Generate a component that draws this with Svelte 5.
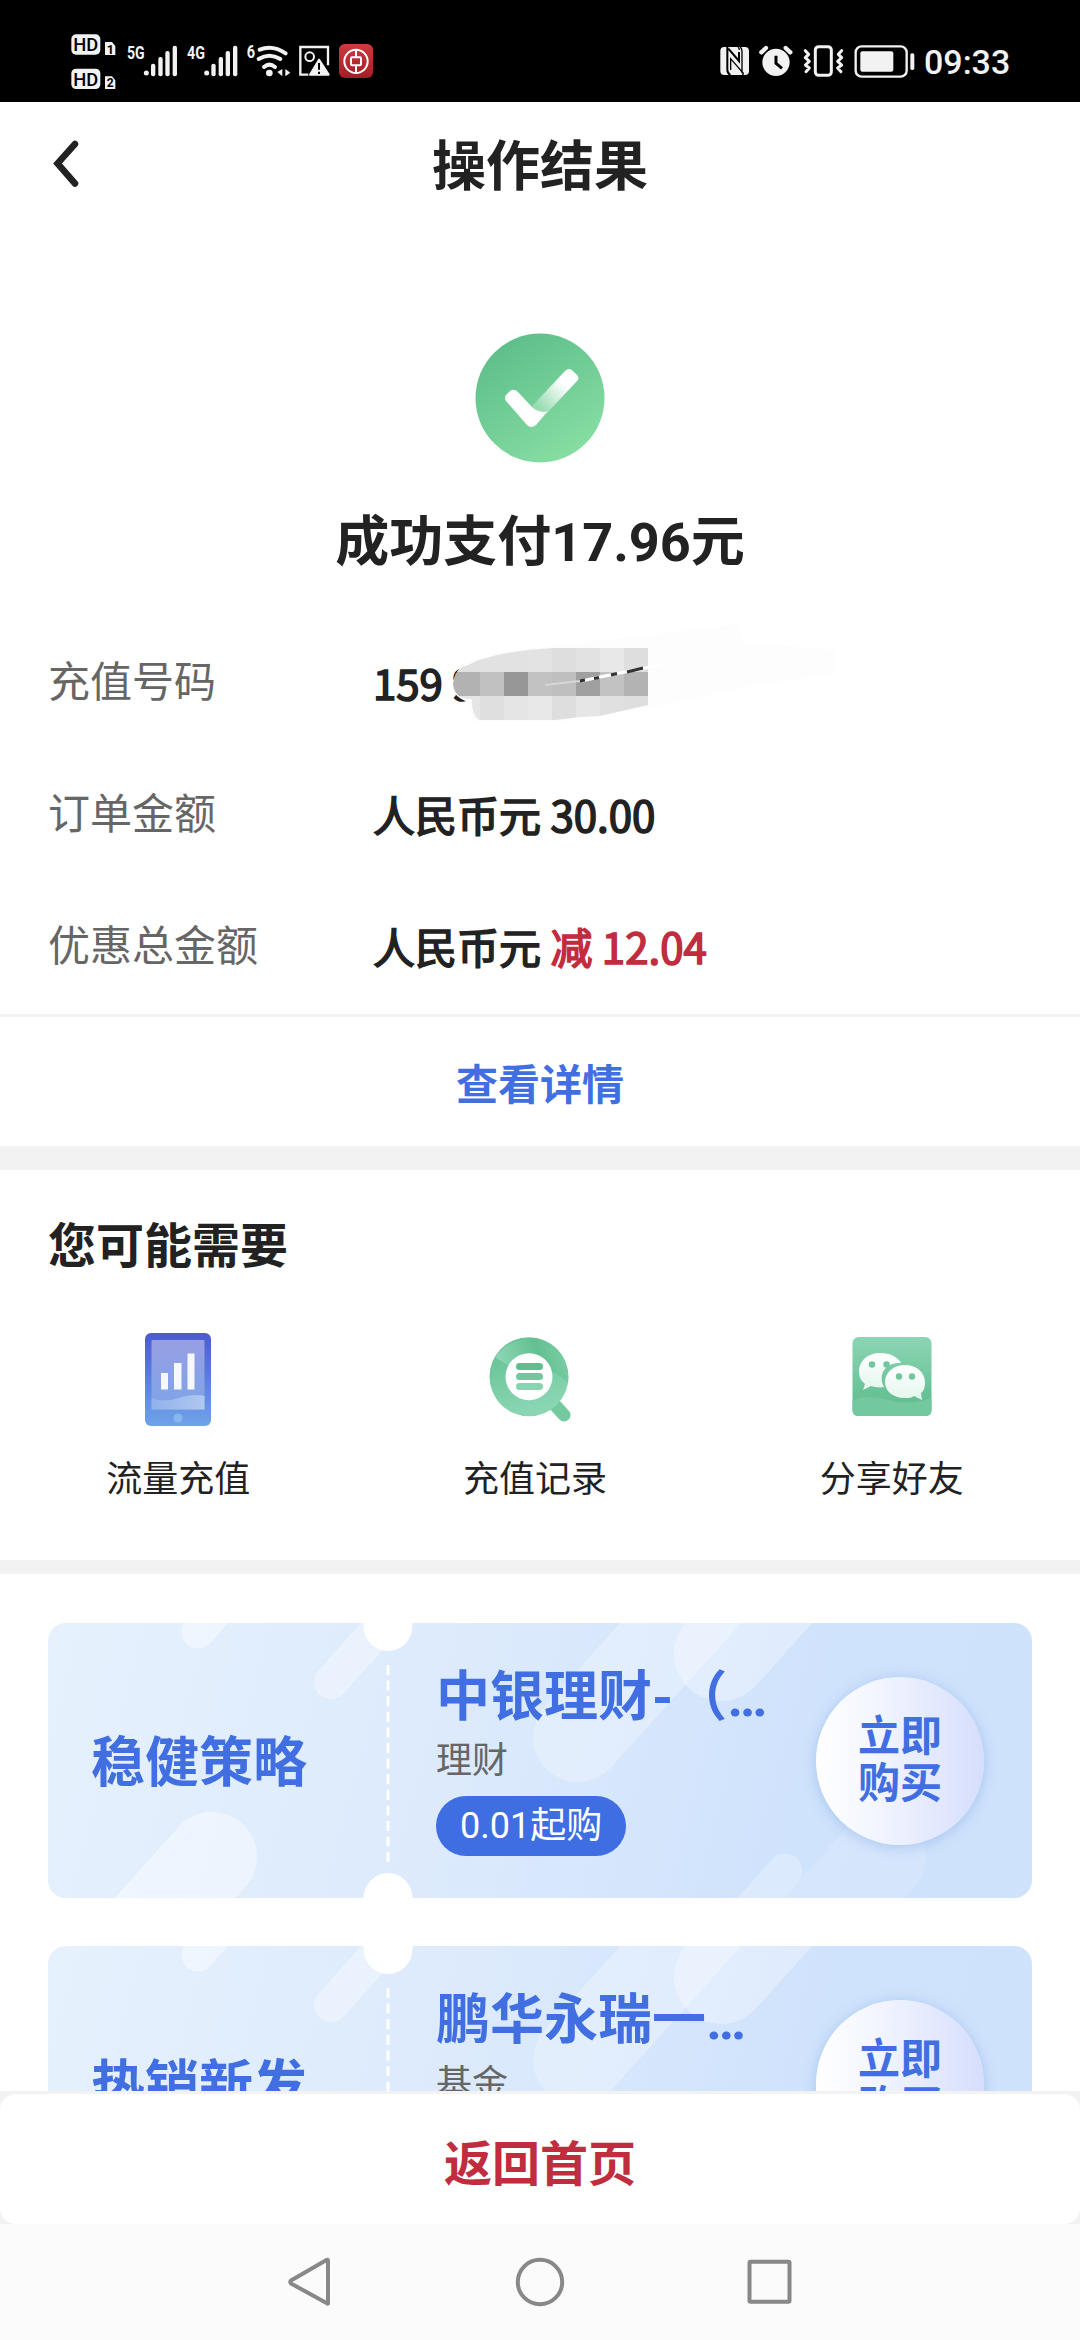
<script lang="ts">
  const details = [
    { label: '充值号码', value: '159 9', off: '', masked: true },
    { label: '订单金额', value: '人民币元 30.00', off: '', masked: false },
    { label: '优惠总金额', value: '人民币元', off: '减 12.04', masked: false },
  ];

  const services = [
    { name: '流量充值', icon: 'tablet' },
    { name: '充值记录', icon: 'search' },
    { name: '分享好友', icon: 'chat' },
  ];

  const tickets = [
    { tag: '稳健策略', title: '中银理财-（…', kind: '理财', from: '0.01起购' },
    { tag: '热销新发', title: '鹏华永瑞一…', kind: '基金', from: '' },
  ];

  // rounded light streaks on the ticket background: start point, direction (1 = up-right), radius
  const streaks = [
    { x: 150, y: 9, r: 16.5, dir: 1, o: 0.42 },
    { x: 283, y: 59, r: 17, dir: 1, o: 0.34 },
    { x: 164, y: 234, r: 45, dir: -1, o: 0.42 },
    { x: 530, y: 114, r: 45, dir: 1, o: 0.28 },
    { x: 673, y: 31, r: 47, dir: 1, o: 0.32 },
    { x: 833, y: 234, r: 45, dir: -1, o: 0.13 },
    { x: 737, y: 248, r: 17.5, dir: -1, o: 0.26 },
  ];

  const tiles = [
    ['#e1e1e1', '#e2e2e2', '#e2e2e2', '#e3e3e3', '#dedede', '#e2e2e2', '#e8e8e8', '#dedede'],
    ['#b2b2b2', '#c1c1c1', '#979797', '#c2c2c2', '#bfbfbf', '#a0a0a0', '#c2c2c2', '#b3b3b3'],
    ['#e6e6e6', '#dfdfdf', '#e5e5e5', '#e8e8e8', '#dedede', '#e6e6e6', '#e0e0e0', '#dedede'],
  ];
</script>

{#snippet signal(x: number)}
  <g fill="#f2f2f2">
    <circle cx={x} cy="159" r="7.5" />
    <rect x={x + 14} y="131" width="13" height="38" rx="6" />
    <rect x={x + 36} y="111" width="13" height="58" rx="6" />
    <rect x={x + 57} y="93" width="13" height="76" rx="6" />
    <rect x={x + 79} y="77" width="13" height="92" rx="6" />
  </g>
{/snippet}

<div class="screen">
  <header class="status">
    <div class="status-group left">
      <svg width="51.67" height="80" viewBox="60 0 155 240">
        <rect x="64" y="43" width="87" height="61" rx="14" fill="#f2f2f2" />
        <rect x="64" y="146" width="87" height="61" rx="14" fill="#f2f2f2" />
        <path d="M165 66h21l10 12v27h-31zM165 169h21l10 12v26h-31z" fill="#f2f2f2" />
        <g class="st" fill="#000" font-weight="500">
          <text x="70" y="94" font-size="56" textLength="75" lengthAdjust="spacingAndGlyphs">HD</text>
          <text x="70" y="197" font-size="56" textLength="75" lengthAdjust="spacingAndGlyphs">HD</text>
          <text x="170" y="102" font-size="38" font-weight="700">1</text>
          <text x="170" y="202" font-size="36" font-weight="700">2</text>
        </g>
      </svg>
      <svg width="61.67" height="80" viewBox="215 0 185 240">
        <text class="st" x="230" y="117" font-size="54" font-weight="700" fill="#f2f2f2" textLength="53" lengthAdjust="spacingAndGlyphs">5G</text>
        {@render signal(288)}
      </svg>
      <svg width="60" height="80" viewBox="400 0 180 240">
        <text class="st" x="412" y="117" font-size="54" font-weight="700" fill="#f2f2f2" textLength="54" lengthAdjust="spacingAndGlyphs">4G</text>
        {@render signal(471)}
      </svg>
      <svg width="51.67" height="80" viewBox="580 0 155 240">
        <text class="st" x="591" y="114" font-size="54" font-weight="700" fill="#f2f2f2" textLength="25" lengthAdjust="spacingAndGlyphs">6</text>
        <g fill="none" stroke="#f2f2f2" stroke-width="12" stroke-linecap="round">
          <path d="M630 89q39 -16 78 11" />
          <path d="M627 117q32 -20 65 0" />
          <path d="M643 141q16 -14 33 0" />
        </g>
        <circle cx="659" cy="159" r="10" fill="#f2f2f2" />
        <path d="M698 147v22l-15-13zM707 147v22l15-11z" fill="#f2f2f2" />
      </svg>
      <svg width="40" height="80" viewBox="735 0 120 240">
        <path d="M775 164h-24V81h83v55" fill="none" stroke="#f2f2f2" stroke-width="7" />
        <circle cx="779" cy="110" r="13" fill="none" stroke="#f2f2f2" stroke-width="6" />
        <path d="M807 119l29 45h-56z" fill="#f2f2f2" stroke="#f2f2f2" stroke-width="6" stroke-linejoin="round" />
        <path d="M807 129v20M807 155v7" stroke="#000" stroke-width="6" />
      </svg>
      <svg width="40" height="80" viewBox="855 0 120 240">
        <defs>
          <linearGradient id="boc" x1="0" y1="0" x2="0" y2="1">
            <stop offset="0" stop-color="#cf3a40" />
            <stop offset="1" stop-color="#a41d24" />
          </linearGradient>
        </defs>
        <rect x="867" y="72" width="102" height="102" rx="17" fill="url(#boc)" />
        <g fill="none" stroke="#fff" stroke-width="6">
          <circle cx="918" cy="124" r="35" />
          <rect x="903" y="112" width="30" height="24" rx="3" />
          <path d="M918 89v23M918 136v23" />
        </g>
      </svg>
    </div>
    <div class="status-group right">
      <svg width="38.33" height="80" viewBox="50 0 115 240">
        <rect x="60" y="81" width="86" height="84" rx="12" fill="#f2f2f2" />
        <g fill="none" stroke="#000" stroke-width="6">
          <path d="M81 81v68q0 10 9 16M84 86l32 37V96" />
          <path d="M91 150v-34l38 44q0 3-3 5M117 90q0-6-4-9M125 160V96q0-10-5-15" stroke-width="4" />
        </g>
      </svg>
      <svg width="41.67" height="80" viewBox="165 0 125 240">
        <circle cx="228" cy="127" r="41" fill="#f2f2f2" />
        <path d="M184 97l14-13M271 97l-14-13" stroke="#f2f2f2" stroke-width="13" stroke-linecap="round" />
        <path d="M228 107v23l18 15" fill="none" stroke="#000" stroke-width="9" />
      </svg>
      <svg width="51.67" height="80" viewBox="290 0 155 240">
        <rect x="345" y="80" width="48" height="86" rx="10" fill="none" stroke="#f2f2f2" stroke-width="9" />
        <path d="M315 92l10 11-10 10 12 11-12 11 12 9-10 11M424 92l-10 11 10 10-12 11 12 11-12 9 10 11" fill="none" stroke="#f2f2f2" stroke-width="9" stroke-linecap="round" stroke-linejoin="round" />
      </svg>
      <svg width="71.67" height="80" viewBox="445 0 215 240">
        <rect x="468" y="79" width="153" height="91" rx="18" fill="none" stroke="#f2f2f2" stroke-width="7" />
        <rect x="482" y="94" width="99" height="61" rx="6" fill="#f2f2f2" />
        <rect x="632" y="100" width="12" height="50" rx="5" fill="#f2f2f2" />
      </svg>
      <span class="clock">09:33</span>
    </div>
  </header>

  <main class="page">
    <div class="titlebar">
      <svg class="back" width="32" height="50" viewBox="0 0 32 50">
        <path d="M27 6L9.500 25.500L27 45.500" fill="none" stroke="#222" stroke-width="6.500" stroke-linecap="round" stroke-linejoin="miter" />
      </svg>
      <h1>操作结果</h1>
    </div>

    <section class="result">
      <svg width="130" height="130" viewBox="0 0 130 130">
        <defs>
          <linearGradient id="ok" x1="0.2" y1="0.1" x2="0.75" y2="1">
            <stop offset="0" stop-color="#5fbf8b" />
            <stop offset="1" stop-color="#88dfa3" />
          </linearGradient>
          <linearGradient id="arm" gradientUnits="userSpaceOnUse" x1="66" y1="76" x2="90" y2="52">
            <stop offset="0" stop-color="#fff" stop-opacity="0.25" />
            <stop offset="1" stop-color="#fff" />
          </linearGradient>
        </defs>
        <circle cx="65" cy="65" r="64.5" fill="url(#ok)" />
        <path d="M57 73L90 38q4-4 8 0l4 4q3 3 0 6L72 80q-7 2-15-7z" fill="url(#arm)" />
        <path d="M31 62l4-4q4-3 8 1l14 15q8 7 16 4L61 92q-5 4-9 0L31 68q-2-3 0-6z" fill="#fff" />
      </svg>
      <h2>成功支付17.96元</h2>
    </section>

    <section class="details">
      {#each details as row}
        <div class="row">
          <span class="label">{row.label}</span>
          <span class="value">{row.value}{#if row.off}{' '}<em>{row.off}</em>{/if}</span>
          {#if row.masked}
            <svg class="mask" width="400" height="130" viewBox="440 610 400 130">
              <defs>
                <clipPath id="smudge">
                  <path d="M453 684Q454 672 462 667Q470 665 476 661Q495 655 507 653Q530 649 552 648H648V705L600 716L580 717L556 720H479Q471 714 472 699Q455 700 453 684z" />
                </clipPath>
              </defs>
              <path d="M560 645L740 624L742 642L836 650V674L760 684L660 706L560 722H476Q468 716 468 702Q452 696 451 684L462 664Q500 650 560 645z" fill="#fdfdfd" />
              <g clip-path="url(#smudge)" shape-rendering="crispEdges">
                {#each tiles as line, j}
                  {#each line as c, i}
                    <rect x={i ? 456 + i * 24 : 450} y={648 + j * 24} width={i ? 24 : 30} height="24" fill={c} />
                  {/each}
                {/each}
              </g>
              <path d="M545 685l35-4" fill="none" stroke="#d6d6d6" stroke-width="2" />
              <path d="M582 681l13-3 65-13" fill="none" stroke="#fff" stroke-width="3" />
              <path d="M580 681l5-1M594 678.500l5-1M611 675l6-1.500M627 672l16-4" fill="none" stroke="#333" stroke-width="3" />
            </svg>
          {/if}
        </div>
      {/each}
    </section>

    <div class="more">查看详情</div>

    <section class="needs">
      <h3>您可能需要</h3>
      <div class="services">
        {#each services as s}
          <div class="service">
            {#if s.icon === 'tablet'}
              <svg width="94" height="100" viewBox="0 0 94 100">
                <defs>
                  <linearGradient id="tb" x1="0" y1="0" x2="0" y2="1">
                    <stop offset="0" stop-color="#4c5bd0" />
                    <stop offset="1" stop-color="#6ea3ea" />
                  </linearGradient>
                  <linearGradient id="ts" x1="0" y1="0" x2="0" y2="1">
                    <stop offset="0" stop-color="#979fe3" />
                    <stop offset="1" stop-color="#7ea4e8" />
                  </linearGradient>
                  <linearGradient id="tw" x1="0" y1="0" x2="1" y2="0">
                    <stop offset="0" stop-color="#8fb2ec" />
                    <stop offset="1" stop-color="#b0c8f0" />
                  </linearGradient>
                </defs>
                <rect x="14" y="3" width="66" height="93" rx="6" fill="url(#tb)" />
                <rect x="20.500" y="10" width="53" height="69.500" rx="1" fill="url(#ts)" />
                <path d="M20.500 68q12 5 27 0t26-2v13.500h-53z" fill="url(#tw)" />
                <path d="M30 43h7v16.500h-7zM43 33h7.500v26.500H43zM56.500 23.500h7v36h-7z" fill="#f7f8ff" />
                <circle cx="47" cy="88" r="4.500" fill="#8ab6f0" />
              </svg>
            {:else if s.icon === 'search'}
              <svg width="94" height="100" viewBox="0 0 94 100">
                <defs>
                  <linearGradient id="mg" x1="0" y1="0" x2="0.300" y2="1">
                    <stop offset="0" stop-color="#5fbf90" />
                    <stop offset="1" stop-color="#8ad6b3" />
                  </linearGradient>
                  <linearGradient id="mt" x1="0" y1="0.500" x2="1" y2="0.300">
                    <stop offset="0" stop-color="#8fd7b6" />
                    <stop offset="0.600" stop-color="#63c092" />
                    <stop offset="1" stop-color="#7dcfa7" />
                  </linearGradient>
                </defs>
                <path d="M66 74l10 11" stroke="#74c9a0" stroke-width="13" stroke-linecap="round" />
                <circle cx="41" cy="46.700" r="39.500" fill="url(#mg)" />
                <path d="M7.500 27A39.500 39.500 0 0 1 80 53Q70 42 58 40L24 36Q14 33 7.500 27z" fill="url(#mt)" />
                <circle cx="41" cy="46.700" r="23.500" fill="#fff" />
                <rect x="28" y="33" width="27" height="7" rx="3.500" fill="#5fbe8f" />
                <rect x="28" y="43" width="27" height="7" rx="3.500" fill="#72c79e" />
                <rect x="28" y="53" width="27" height="7" rx="3.500" fill="#88d4b1" />
              </svg>
            {:else}
              <svg width="94" height="100" viewBox="0 0 94 100">
                <defs>
                  <linearGradient id="wc" x1="0" y1="0" x2="0" y2="1">
                    <stop offset="0" stop-color="#8dd5b4" />
                    <stop offset="0.800" stop-color="#64c093" />
                  </linearGradient>
                  <linearGradient id="bb" x1="0" y1="0" x2="0" y2="1">
                    <stop offset="0" stop-color="#fff" />
                    <stop offset="1" stop-color="#e4f6ee" />
                  </linearGradient>
                </defs>
                <rect x="7.500" y="7" width="79" height="79" rx="6" fill="url(#wc)" />
                <path d="M7.500 70q16-6 36 0t43-2v12q0 6-6 6h-67q-6 0-6-6z" fill="#73c89f" />
                <path d="M35 23c-12 0-21 8-21 18 0 6 2 10 6 13l-2 6 8-4c4 1 8 2 14 1h-1c-7-14 3-25 17-24-3-6-11-10-21-10z" fill="url(#bb)" />
                <path d="M60 35c-11 0-20 7-20 17s9 16 20 16c4 0 6 0 9-2l8 4-1-7c3-2 4-6 4-11 0-10-9-17-20-17z" fill="url(#bb)" />
                <g fill="#6fc79d">
                  <circle cx="27" cy="34.500" r="3.200" />
                  <circle cx="41.500" cy="34.500" r="3.200" />
                  <circle cx="54" cy="46.500" r="3.200" />
                  <circle cx="67" cy="46.500" r="3.200" />
                </g>
              </svg>
            {/if}
            <span>{s.name}</span>
          </div>
        {/each}
      </div>
    </section>

    <section class="tickets">
      {#each tickets as t}
        <article class="ticket">
          <svg class="art" width="984" height="275" viewBox="0 0 984 275">
            {#each streaks as k}
              <line x1={k.x} y1={k.y} x2={k.x + 200 * k.dir} y2={k.y - 222 * k.dir} stroke="#fff" stroke-opacity={k.o} stroke-width={k.r * 2} stroke-linecap="round" />
            {/each}
            <ellipse cx="340" cy="3" rx="24.500" ry="25" fill="#fff" />
            <ellipse cx="340" cy="275" rx="24.500" ry="25" fill="#fff" />
            <path d="M340 42v197" stroke="#fff" stroke-width="3" stroke-dasharray="10 5.600" />
          </svg>
          <div class="tag">{t.tag}</div>
          <div class="info">
            <div class="name">{t.title}</div>
            <div class="kind">{t.kind}</div>
            {#if t.from}<div class="from">{t.from}</div>{/if}
          </div>
          <div class="buy"><span>立即</span><span>购买</span></div>
        </article>
      {/each}
    </section>
  </main>

  <footer class="footer"><div class="home">返回首页</div></footer>

  <nav class="nav">
    <svg width="50" height="56" viewBox="0 0 50 56">
      <path d="M43 7v42q0 1.500-1.500 0L6 29.500q-1.500-1.500 0-3L41.500 6q1.500-1 1.500 1z" fill="none" stroke="#888" stroke-width="4" stroke-linejoin="round" />
    </svg>
    <svg width="50" height="56" viewBox="0 0 50 56">
      <circle cx="25" cy="28" r="22.200" fill="none" stroke="#888" stroke-width="4" />
    </svg>
    <svg width="50" height="56" viewBox="0 0 50 56">
      <rect x="4.500" y="7.800" width="40" height="40" rx="1" fill="none" stroke="#888" stroke-width="4" />
    </svg>
  </nav>
</div>

<style>
  :global(body) {
    background: #fff;
  }
  .screen {
    width: 1080px;
    height: 2340px;
    display: flex;
    flex-direction: column;
    overflow: hidden;
    background: #fff;
    color: #222;
    font-family: Roboto, 'Noto Sans CJK SC', sans-serif;
  }
  svg {
    display: block;
    flex: none;
  }
  h1,
  h2,
  h3 {
    margin: 0;
    font-weight: 700;
  }
  .status {
    flex: none;
    height: 102px;
    box-sizing: border-box;
    padding: 20px 71px 0 70px;
    background: #000;
    display: flex;
    justify-content: space-between;
  }
  .status-group {
    display: flex;
  }
  .st {
    font-family: Roboto, sans-serif;
  }
  .clock {
    width: 85px;
    margin-left: 4px;
    font-size: 34px;
    font-weight: 500;
    line-height: 84px;
    color: #f2f2f2;
    white-space: nowrap;
  }
  .page {
    flex: none;
    height: 1989px;
    overflow: hidden;
  }
  .titlebar {
    height: 122px;
    padding: 0 48px;
    display: grid;
    grid-template-columns: 32px 1fr 32px;
    align-items: start;
  }
  .back {
    margin-top: 36px;
  }
  h1 {
    padding-top: 3px;
    text-align: center;
    font-size: 54px;
    line-height: 125px;
  }
  .result {
    height: 388px;
    box-sizing: border-box;
    padding-top: 109px;
    display: flex;
    flex-direction: column;
    align-items: center;
  }
  h2 {
    margin-top: 44px;
    font-size: 54px;
    line-height: 72px;
  }
  .details {
    height: 405px;
    padding: 4px 48px 0;
    box-sizing: border-box;
    border-bottom: 3px solid #f2f2f2;
  }
  .row {
    position: relative;
    height: 132px;
    display: grid;
    grid-template-columns: 325px 1fr;
    font-size: 42px;
    line-height: 134px;
  }
  .label {
    color: #666;
  }
  .value {
    font-family: 'Noto Sans CJK SC', sans-serif;
    font-weight: 400;
    -webkit-text-stroke: 1.6px currentColor;
    white-space: nowrap;
    line-height: 132px;
  }
  em {
    font-style: normal;
    color: #c12c3e;
  }
  .mask {
    position: absolute;
    left: 392px;
    top: -6px;
  }
  .more {
    height: 129px;
    text-align: center;
    font-size: 42px;
    font-weight: 700;
    line-height: 137px;
    color: #416fe2;
  }
  .needs {
    height: 428px;
    box-sizing: border-box;
    border-top: 24px solid #f2f2f2;
    border-bottom: 14px solid #f2f2f2;
    padding-top: 39px;
  }
  h3 {
    padding-left: 48px;
    font-size: 48px;
    line-height: 76px;
  }
  .services {
    width: 1070px;
    margin-top: 45px;
    display: grid;
    grid-template-columns: repeat(3, 1fr);
  }
  .service {
    display: flex;
    flex-direction: column;
    align-items: center;
    gap: 22px;
    font-size: 36px;
    line-height: 56px;
  }
  .tickets {
    padding: 49px 48px 0;
    display: flex;
    flex-direction: column;
    gap: 48px;
  }
  .ticket {
    position: relative;
    height: 275px;
    border-radius: 18px;
    overflow: hidden;
    background: linear-gradient(105deg, #e6f1fd 0%, #dceafc 42%, #d0e3fc 75%, #cee2fb 100%);
    display: grid;
    grid-template-columns: 388px 1fr 216px;
    color: #416fe2;
  }
  .art {
    position: absolute;
    left: 0;
    top: 0;
  }
  .tag,
  .info,
  .buy {
    position: relative;
  }
  .tag {
    padding-left: 43px;
    font-size: 54px;
    font-weight: 700;
    line-height: 282px;
  }
  .info {
    padding-top: 39px;
    display: flex;
    flex-direction: column;
    align-items: flex-start;
  }
  .name {
    font-size: 54px;
    font-weight: 700;
    line-height: 72px;
    white-space: nowrap;
  }
  .kind {
    color: #666;
    font-size: 36px;
    line-height: 54px;
  }
  .from {
    margin-top: 8px;
    height: 60px;
    padding: 0 24px;
    border-radius: 30px;
    background: #3f6ee3;
    color: #fff;
    font-size: 36px;
    line-height: 61px;
  }
  .buy {
    box-sizing: border-box;
    width: 168px;
    height: 168px;
    margin-top: 54px;
    padding-bottom: 3px;
    border-radius: 50%;
    background: linear-gradient(90deg, #fff 0%, #f3f6ff 35%, #d6defc 100%);
    box-shadow: 0 2px 14px rgba(90, 140, 220, 0.35);
    display: flex;
    flex-direction: column;
    align-items: center;
    justify-content: center;
    font-size: 42px;
    font-weight: 700;
    line-height: 47px;
  }
  .footer {
    flex: none;
    height: 133px;
    padding-top: 3px;
    box-sizing: border-box;
    background: #f2f2f2;
  }
  .home {
    height: 130px;
    border-radius: 16px;
    background: #fff;
    text-align: center;
    color: #c12c3e;
    font-size: 48px;
    font-weight: 700;
    line-height: 142px;
  }
  .nav {
    flex: 1;
    padding: 30px 285px 0;
    background: #fbfbfb;
    display: flex;
    justify-content: space-between;
  }
</style>
